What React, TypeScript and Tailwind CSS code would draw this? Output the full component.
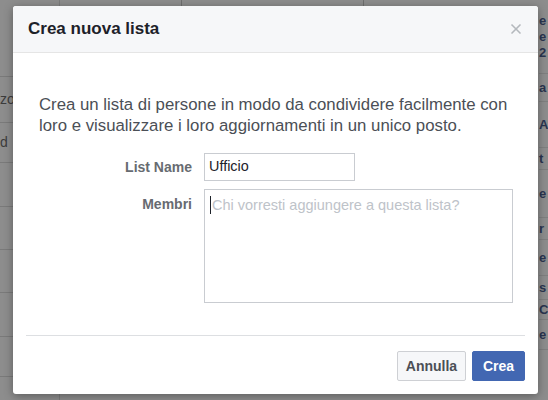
import { X } from 'lucide-react';

const leftRows = [
  { h: 'h-[77px]', text: '' },
  { h: 'h-[46px]', text: 'zo' },
  { h: 'h-[40px]', text: 'd' },
  { h: 'h-[44px]', text: '' },
  { h: 'h-[43px]', text: '' },
  { h: 'h-[43px]', text: '' },
  { h: 'h-[44px]', text: '' },
  { h: 'h-[40px]', text: '' },
];

const rightRows = [
  { h: 'h-[74px]', lines: ['e', 'e', '2'] },
  { h: 'h-[28px]', lines: ['a'] },
  { h: 'h-[46px]', lines: ['A'] },
  { h: 'h-[22px]', lines: ['t'] },
  { h: 'h-[48px]', lines: ['e'] },
  { h: 'h-[22px]', lines: ['r'] },
  { h: 'h-[36px]', lines: ['e'] },
  { h: 'h-[24px]', lines: ['s'] },
  { h: 'h-[20px]', lines: ['C'] },
  { h: 'h-[30px]', lines: ['e'] },
];

const Background = () => (
  <div className="flex h-full w-full">
    <div className="flex w-[60px] flex-col border-r border-[#7c7c7c]">
      {leftRows.map((r, i) => (
        <div key={i} className={`${r.h} flex items-center border-b border-[#7a7a7a] text-[14px] text-[#3c3c3c]`}>
          <span>{r.text}</span>
        </div>
      ))}
    </div>
    <div className="flex flex-1 flex-col">
      <div className="flex h-[6px]">
        <div className="w-[122px] border-r border-[#6f6f6f]" />
        <div className="w-[182px] border-r border-[#6f6f6f]" />
        <div className="flex-1" />
      </div>
    </div>
    <div className="flex w-[28px] flex-col pl-[19px]">
      {rightRows.map((r, i) => (
        <div key={i} className={`${r.h} flex flex-col justify-center border-b border-[#7f7f7f] text-[13px] font-bold leading-[16px] text-[#2a3550]`}>
          {r.lines.map((l, j) => (
            <span key={j}>{l}</span>
          ))}
        </div>
      ))}
    </div>
  </div>
);

export default function App() {
  return (
    <div className="relative h-[400px] w-[548px] overflow-hidden bg-[#8d8d8d] font-['Liberation_Sans',Arial,sans-serif]">
      <Background />

      <div className="absolute left-[13px] top-[6px] flex h-[388px] w-[525px] flex-col rounded-[3px] bg-white shadow-[0_2px_10px_rgba(0,0,0,0.35)]">
        <div className="flex h-[47px] items-center justify-between rounded-t-[3px] border-b border-[#e5e5e5] bg-[#f6f7f9] pl-[15px] pr-[14px]">
          <span className="text-[17px] font-bold text-[#1d2129]">Crea nuova lista</span>
          <X size={16} strokeWidth={2.5} className="text-[#b4b8bd]" />
        </div>

        <div className="px-[26px] pt-[41px] text-[16.8px] leading-[21px] text-[#4b4f56]">
          Crea un lista di persone in modo da condividere facilmente con loro e visualizzare i loro aggiornamenti in un unico posto.
        </div>

        <div className="mt-[17px] grid grid-cols-[179px_1fr] items-start gap-x-[12px] gap-y-[8px] pr-[25px]">
          <div className="flex h-[28px] items-center justify-end text-[14px] font-bold text-[#676b71]">List Name</div>
          <div className="flex h-[28px] w-[151px] items-center border border-[#c9ccd1] px-[4px] text-[14.4px] text-[#1d2129]">
            Ufficio
          </div>
          <div className="flex h-[30px] items-center justify-end text-[14px] font-bold text-[#676b71]">Membri</div>
          <div className="flex h-[114px] items-start border border-[#c9ccd1] px-[5px] pt-[6px] text-[14.5px] leading-[18px] text-[#bec3c9]">
            <span className="mr-[1px] inline-block h-[18px] w-[1px] bg-[#1d2129]" />
            Chi vorresti aggiungere a questa lista?
          </div>
        </div>

        <div className="mx-[13px] mt-[32px] border-t border-[#dddfe2]" />

        <div className="flex justify-end gap-[6px] pr-[13px] pt-[15px]">
          <button className="h-[30px] w-[69px] rounded-[2px] border border-[#ced0d4] bg-[#f6f7f9] text-[14px] font-bold text-[#4b4f56]">
            Annulla
          </button>
          <button className="h-[30px] w-[53px] rounded-[2px] border border-[#4267b2] bg-[#4267b2] text-[14px] font-bold text-white">
            Crea
          </button>
        </div>
      </div>
    </div>
  );
}
